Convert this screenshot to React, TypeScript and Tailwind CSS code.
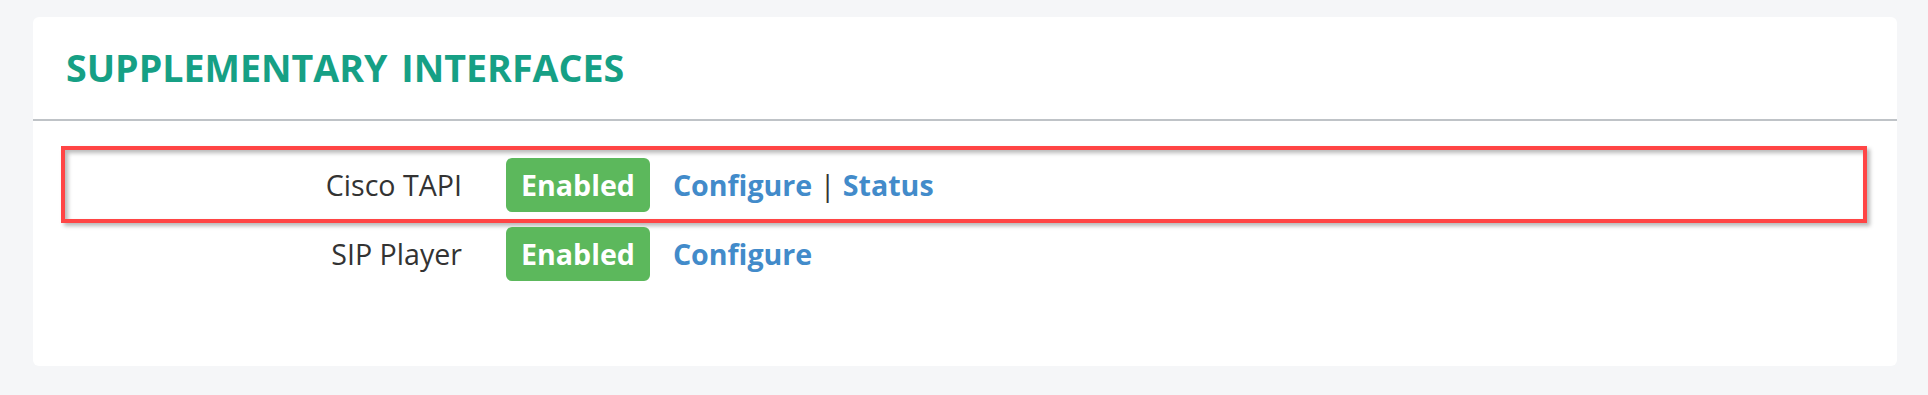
import type { ReactNode } from "react";

type Iface = {
  name: string;
  links: string[];
  highlight?: boolean;
};

const interfaces: Iface[] = [
  { name: "Cisco TAPI", links: ["Configure", "Status"], highlight: true },
  { name: "SIP Player", links: ["Configure"] },
];

function Row({ item }: { item: Iface }) {
  const links: ReactNode[] = [];
  item.links.forEach((l, i) => {
    if (i > 0) {
      links.push(
        <span key={`sep-${i}`} className="font-normal text-[#333333]">
          {" | "}
        </span>
      );
    }
    links.push(
      <a key={l} href="#" className="font-bold text-[#428bca]">
        {l}
      </a>
    );
  });

  return (
    <div
      className={
        item.highlight
          ? "flex items-center border-4 border-[#ff4545] pt-[8px] pb-[7px] shadow-[3px_3px_4px_rgba(0,0,0,0.28),inset_3px_3px_4px_rgba(0,0,0,0.28)]"
          : "flex items-center border-4 border-transparent"
      }
    >
      <div className="w-[397px] text-right text-[28.6px] text-[#333333]">{item.name}</div>
      <span className="ml-[44px] flex h-[54px] items-center rounded-[6px] bg-[#5cb85c] px-[15px] text-[28.6px] font-bold text-white">
        Enabled
      </span>
      <div className="ml-[23px] whitespace-pre text-[28.6px]">{links}</div>
    </div>
  );
}

export default function App() {
  return (
    <div
      className="h-[395px] bg-[#f5f6f8] pt-[17px]"
      style={{ fontFamily: '"Open Sans", "Liberation Sans", sans-serif' }}
    >
      <div className="ml-[33px] h-[349px] w-[1864px] rounded-[6px] bg-white">
        <div className="flex h-[104px] items-center border-b-2 border-[#bfc3c7] pl-[33px]">
          <h2 className="text-[37.6px] font-bold text-[#16a085] [word-spacing:4px]">
            SUPPLEMENTARY INTERFACES
          </h2>
        </div>
        <div className="pt-[25px] pr-[30px] pl-[28px]">
          {interfaces.map((item) => (
            <Row key={item.name} item={item} />
          ))}
        </div>
      </div>
    </div>
  );
}
